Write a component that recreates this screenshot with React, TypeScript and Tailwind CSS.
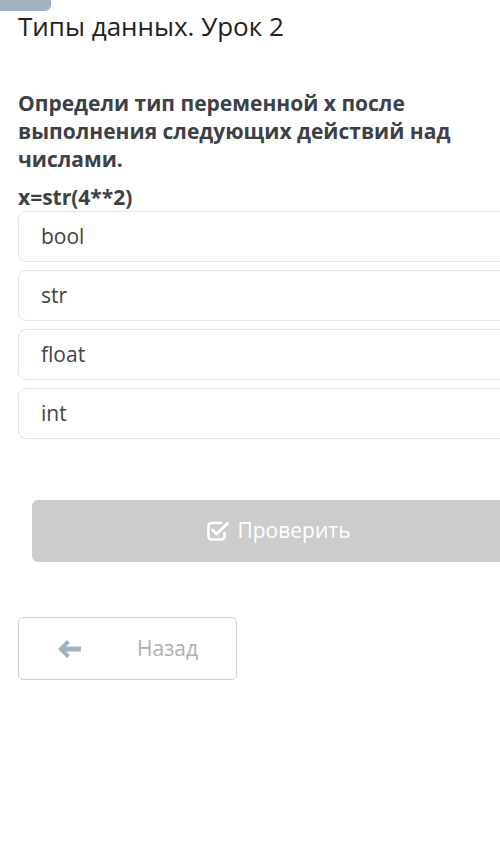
const options = ["bool", "str", "float", "int"];

const App = () => {
  return (
    <div className="w-[500px] h-[858px] overflow-hidden bg-white relative font-['Open_Sans',sans-serif]">
      <div className="absolute top-0 left-0 w-[51px] h-[11px] bg-[#9fb3c3] rounded-br-[6px]"></div>

      <h1 className="pl-[18px] pt-[10px] text-[26px] leading-[32px] text-[#222] font-normal">Типы данных. Урок 2</h1>

      <div className="pl-[18px] pt-[47px] pr-[10px]">
        <p className="text-[21px] leading-[28px] font-bold text-[#3d4147]">
          Определи тип переменной x после выполнения следующих действий над числами.
        </p>
        <p className="mt-[12px] text-[21px] leading-[24px] font-bold text-[#3d4147]">x=str(4**2)</p>
      </div>

      <ul className="flex flex-col gap-[8px] pl-[18px] mt-[2px]">
        {options.map((opt) => (
          <li
            key={opt}
            className="w-[500px] h-[51px] flex items-center pl-[22px] border border-[#e6e6e6] rounded-[8px] bg-white text-[21px] text-[#444]"
          >
            {opt}
          </li>
        ))}
      </ul>

      <div className="pl-[32px] mt-[61px]">
        <div className="w-[494px] h-[62px] bg-[#cccccc] rounded-[6px] flex items-center justify-center gap-[7px] text-white text-[21px]">
          <svg width="23" height="20" viewBox="0 0 23 20" fill="none" stroke="#fff" strokeWidth="2.6" strokeLinejoin="round">
            <path d="M15 2 H4.5 A3 3 0 0 0 1.5 5 V15.5 A3 3 0 0 0 4.5 18.5 H14.5 A3 3 0 0 0 17.5 15.5 V11" />
            <path d="M5.5 9 L9.5 13 L20.5 2.5" strokeLinecap="round" strokeWidth="3" />
          </svg>
          <span>Проверить</span>
        </div>
      </div>

      <div className="pl-[18px] mt-[55px]">
        <div className="w-[219px] h-[63px] border border-[#cfcfcf] rounded-[5px] flex items-center">
          <svg className="ml-[39px]" width="23" height="18" viewBox="0 0 23 18">
            <path d="M0 9 L9 0 L12 3 L8 6.5 L23 6.5 L23 11.5 L8 11.5 L12 15 L9 18 Z" fill="#a3b2bf" />
          </svg>
          <span className="ml-[56px] text-[21px] text-[#b0b0b0]">Назад</span>
        </div>
      </div>
    </div>
  );
};

export default App;
